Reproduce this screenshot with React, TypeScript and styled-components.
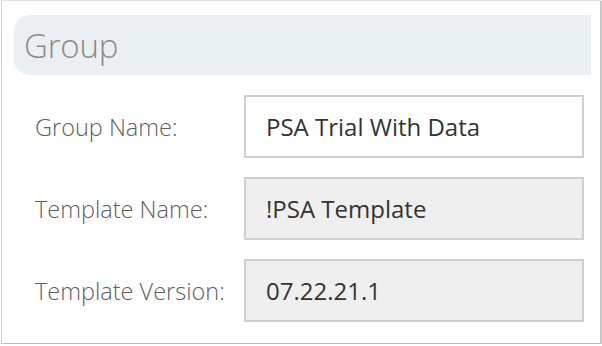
import React from "react";
import styled, { createGlobalStyle } from "styled-components";

const GlobalStyle = createGlobalStyle`
  html, body {
    margin: 0;
    padding: 0;
    background: #ffffff;
  }
  body {
    font-family: "Open Sans", "Noto Sans", Arial, sans-serif;
  }
`;

const Frame = styled.div`
  box-sizing: border-box;
  width: 600px;
  height: 344px;
  margin-left: 1px;
  background: #ffffff;
  border-left: 1px solid #d6d6d6;
  border-top: 1px solid #e2e2e2;
  border-right: 1px solid #c4c4c4;
  border-bottom: 1px solid #bdbdbd;
  box-shadow: 1px 1px 1px rgba(0, 0, 0, 0.18);
  padding: 14px 9px 0 12px;
`;

const Header = styled.div`
  height: 60px;
  background: #eaeff2;
  border-radius: 16px 0 0 16px;
  display: flex;
  align-items: center;
  padding-left: 10px;
`;

const Title = styled.h2`
  margin: 0;
  font-size: 33px;
  font-weight: 300;
  color: #8a8a8a;
  letter-spacing: -0.2px;
`;

const Form = styled.div`
  display: grid;
  grid-template-columns: 209px 340px;
  row-gap: 19px;
  padding: 20px 0 0 21px;
`;

const Label = styled.label`
  display: flex;
  align-items: center;
  font-size: 23.5px;
  font-weight: 300;
  color: #5e5e5e;
`;

const Field = styled.div<{ $readOnly?: boolean }>`
  box-sizing: border-box;
  height: 63px;
  display: flex;
  align-items: center;
  padding-left: 20px;
  border: 2px solid #d0d0d0;
  background: ${({ $readOnly }) => ($readOnly ? "#efefef" : "#ffffff")};
  font-size: 24px;
  color: #333333;
`;

const rows = [
  { label: "Group Name:", value: "PSA Trial With Data", readOnly: false },
  { label: "Template Name:", value: "!PSA Template", readOnly: true },
  { label: "Template Version:", value: "07.22.21.1", readOnly: true },
];

export default function App() {
  return (
    <>
      <GlobalStyle />
      <Frame>
        <Header>
          <Title>Group</Title>
        </Header>
        <Form>
          {rows.map((r) => (
            <React.Fragment key={r.label}>
              <Label>{r.label}</Label>
              <Field $readOnly={r.readOnly}>{r.value}</Field>
            </React.Fragment>
          ))}
        </Form>
      </Frame>
    </>
  );
}
